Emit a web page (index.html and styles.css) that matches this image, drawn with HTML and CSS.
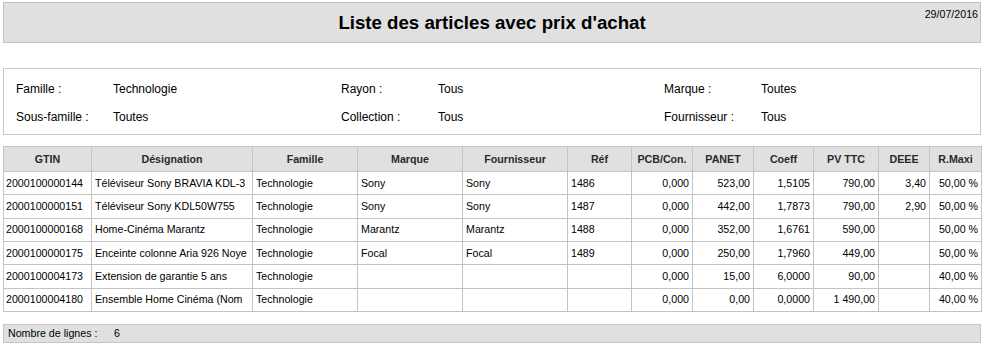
FILE: index.html
```html
<!DOCTYPE html>
<html lang="fr">
<head>
<meta charset="utf-8">
<title>Liste des articles avec prix d'achat</title>
<link rel="stylesheet" href="styles.css">
</head>
<body>
<div class="page">
  <header class="title-bar">
    <div class="spacer"></div>
    <h1 class="title">Liste des articles avec prix d'achat</h1>
    <div class="date">29/07/2016</div>
  </header>

  <section class="filters">
    <span class="f-label">Famille :</span><span class="f-value">Technologie</span>
    <span class="f-label">Rayon :</span><span class="f-value">Tous</span>
    <span class="f-label">Marque :</span><span class="f-value">Toutes</span>
    <span class="f-label">Sous-famille :</span><span class="f-value">Toutes</span>
    <span class="f-label">Collection :</span><span class="f-value">Tous</span>
    <span class="f-label">Fournisseur :</span><span class="f-value">Tous</span>
  </section>

  <table class="grid">
    <colgroup>
      <col class="c-gtin"><col class="c-des"><col class="c-fam"><col class="c-mar"><col class="c-four">
      <col class="c-ref"><col class="c-pcb"><col class="c-pa"><col class="c-coef"><col class="c-pv">
      <col class="c-deee"><col class="c-rmax">
    </colgroup>
    <thead>
      <tr>
        <th>GTIN</th><th>Désignation</th><th>Famille</th><th>Marque</th><th>Fournisseur</th><th>Réf</th>
        <th>PCB/Con.</th><th>PANET</th><th>Coeff</th><th>PV TTC</th><th>DEEE</th><th>R.Maxi</th>
      </tr>
    </thead>
    <tbody>
      <tr>
        <td>2000100000144</td><td>Téléviseur Sony BRAVIA KDL-3</td><td>Technologie</td><td>Sony</td><td>Sony</td><td>1486</td>
        <td class="num">0,000</td><td class="num">523,00</td><td class="num">1,5105</td><td class="num">790,00</td><td class="num">3,40</td><td class="num">50,00 %</td>
      </tr>
      <tr>
        <td>2000100000151</td><td>Téléviseur Sony KDL50W755</td><td>Technologie</td><td>Sony</td><td>Sony</td><td>1487</td>
        <td class="num">0,000</td><td class="num">442,00</td><td class="num">1,7873</td><td class="num">790,00</td><td class="num">2,90</td><td class="num">50,00 %</td>
      </tr>
      <tr>
        <td>2000100000168</td><td>Home-Cinéma Marantz</td><td>Technologie</td><td>Marantz</td><td>Marantz</td><td>1488</td>
        <td class="num">0,000</td><td class="num">352,00</td><td class="num">1,6761</td><td class="num">590,00</td><td class="num"></td><td class="num">50,00 %</td>
      </tr>
      <tr>
        <td>2000100000175</td><td>Enceinte colonne Aria 926 Noye</td><td>Technologie</td><td>Focal</td><td>Focal</td><td>1489</td>
        <td class="num">0,000</td><td class="num">250,00</td><td class="num">1,7960</td><td class="num">449,00</td><td class="num"></td><td class="num">50,00 %</td>
      </tr>
      <tr>
        <td>2000100004173</td><td>Extension de garantie 5 ans</td><td>Technologie</td><td></td><td></td><td></td>
        <td class="num">0,000</td><td class="num">15,00</td><td class="num">6,0000</td><td class="num">90,00</td><td class="num"></td><td class="num">40,00 %</td>
      </tr>
      <tr>
        <td>2000100004180</td><td>Ensemble Home Cinéma (Nom</td><td>Technologie</td><td></td><td></td><td></td>
        <td class="num">0,000</td><td class="num">0,00</td><td class="num">0,0000</td><td class="num">1 490,00</td><td class="num"></td><td class="num">40,00 %</td>
      </tr>
    </tbody>
  </table>

  <footer class="footer-bar">
    <span class="ft-label">Nombre de lignes :</span><span class="ft-value">6</span>
  </footer>
</div>
</body>
</html>
```

FILE: styles.css
```css
html, body {
  margin: 0;
  padding: 0;
  background: #ffffff;
}

body {
  font-family: "Liberation Sans", Arial, sans-serif;
  color: #000;
}

.page {
  width: 978px;
  padding: 2px 0 0 3px;
  display: flex;
  flex-direction: column;
}

.title-bar {
  height: 39px;
  background: #e0e0e0;
  border: 1px solid #c0c0c0;
  display: grid;
  grid-template-columns: 1fr auto 1fr;
  box-sizing: content-box;
}

.title {
  margin: 0;
  font-size: 18.67px;
  font-weight: bold;
  line-height: 39px;
  white-space: nowrap;
}

.date {
  justify-self: end;
  align-self: start;
  font-size: 10.67px;
  line-height: 12px;
  padding: 5px 2px 0 0;
}

.filters {
  margin-top: 25px;
  height: 41px;
  border: 1px solid #c8c8c8;
  padding: 13px 0 11px 12px;
  display: grid;
  grid-template-columns: 97px 228px 97px 226px 97px 1fr;
  grid-auto-rows: 14px;
  row-gap: 14px;
  font-size: 12px;
  line-height: 14px;
}

.f-label, .f-value {
  white-space: nowrap;
}

.grid {
  margin-top: 11px;
  width: 978px;
  border-collapse: collapse;
  table-layout: fixed;
  font-size: 10.67px;
}

.c-gtin { width: 88px; }
.c-des { width: 161px; }
.c-fam { width: 105px; }
.c-mar { width: 105px; }
.c-four { width: 105px; }
.c-ref { width: 64px; }
.c-pcb { width: 61px; }
.c-pa { width: 61px; }
.c-coef { width: 60px; }
.c-pv { width: 65px; }
.c-deee { width: 51px; }
.c-rmax { width: 52px; }

.grid th, .grid td {
  border: 1px solid #c4c4c4;
  padding: 0 3px;
  white-space: nowrap;
  overflow: hidden;
  text-overflow: clip;
  line-height: 13px;
}

.grid th {
  background: #e0e0e0;
  color: #2a2a2a;
  font-weight: bold;
  text-align: center;
  height: 24px;
}

.grid td {
  height: 22.33px;
  text-align: left;
}

.grid td:first-child {
  padding-left: 2px;
}

.grid td.num {
  text-align: right;
}

.footer-bar {
  margin-top: 12px;
  height: 17px;
  background: #e0e0e0;
  border: 1px solid #c4c4c4;
  display: flex;
  align-items: center;
  padding-left: 4px;
  font-size: 10.67px;
}

.ft-label {
  width: 106px;
  white-space: nowrap;
}
```
